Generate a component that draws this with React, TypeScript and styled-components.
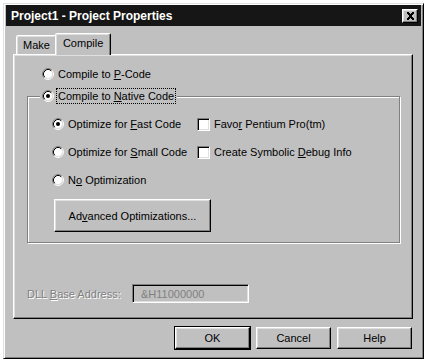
import styled, { createGlobalStyle } from 'styled-components';

const GlobalStyles = createGlobalStyle`
  html, body {
    margin: 0;
    padding: 0;
    background: #ffffff;
  }
  body {
    font-family: "Liberation Sans", Arial, sans-serif;
    font-size: 11px;
    color: #000000;
  }
  * {
    box-sizing: border-box;
  }
`;

const Window = styled.div`
  margin: 3px 0 0 3px;
  width: 421px;
  height: 356px;
  background: #c0c0c0;
  border: 1px solid;
  border-color: #dfdfdf #000000 #000000 #dfdfdf;
  box-shadow: inset 1px 1px 0 #ffffff, inset -1px -1px 0 #808080;
  padding: 1px 2px 2px 2px;
  display: flex;
  flex-direction: column;
`;

const TitleBar = styled.div`
  height: 21px;
  background: #161616;
  display: flex;
  align-items: center;
  justify-content: space-between;
  padding: 0 3px 0 5px;
`;

const Title = styled.span`
  color: #ffffff;
  font-weight: bold;
  font-size: 12px;
`;

const CloseButton = styled.div`
  width: 16px;
  height: 14px;
  background: #c0c0c0;
  border: 1px solid;
  border-color: #ffffff #000000 #000000 #ffffff;
  box-shadow: inset -1px -1px 0 #808080, inset 1px 1px 0 #dfdfdf;
  display: flex;
  align-items: center;
  justify-content: center;
`;

const Body = styled.div`
  padding: 7px 8px 6px 7px;
  display: flex;
  flex-direction: column;
`;

const TabStrip = styled.div`
  display: flex;
  align-items: flex-end;
  height: 21px;
  padding-left: 3px;
`;

const Tab = styled.div<{ $active?: boolean }>`
  position: relative;
  z-index: ${(p) => (p.$active ? 1 : 0)};
  height: ${(p) => (p.$active ? '22px' : '19px')};
  margin-bottom: ${(p) => (p.$active ? '-1px' : '0')};
  margin-left: ${(p) => (p.$active ? '-2px' : '0')};
  padding: ${(p) => (p.$active ? '2px 7px 0 7px' : '2px 6px 0 6px')};
  background: #c0c0c0;
  border: 1px solid;
  border-bottom: none;
  border-color: #ffffff #000000 transparent #ffffff;
  border-radius: 2px 2px 0 0;
  box-shadow: inset -1px 0 0 #808080, inset 1px 1px 0 #dfdfdf;
  line-height: 14px;
`;

const Page = styled.div`
  height: 265px;
  border: 1px solid;
  border-color: #ffffff #000000 #000000 #ffffff;
  box-shadow: inset -1px -1px 0 #808080, inset 1px 1px 0 #dfdfdf;
  padding: 11px 0 0 13px;
  display: flex;
  flex-direction: column;
`;

const OptionRow = styled.label<{ $indent?: number }>`
  display: flex;
  align-items: center;
  gap: 4px;
  height: 16px;
  margin-left: ${(p) => p.$indent ?? 0}px;
  white-space: nowrap;
`;

const Group = styled.div`
  margin-top: 14px;
  width: 373px;
  border: 1px solid #808080;
  box-shadow: 1px 1px 0 #ffffff, inset 1px 1px 0 #ffffff;
  padding-bottom: 10px;
  display: flex;
  flex-direction: column;
`;

const Caption = styled.div`
  margin: -9px 0 0 12px;
  width: fit-content;
  background: #c0c0c0;
  padding: 0 2px;
`;

const FocusText = styled.span`
  outline: 1px dotted #000000;
  padding: 0 1px;
  margin-left: -1px;
  line-height: 14px;
`;

const OptionsGrid = styled.div`
  margin-top: 12px;
  padding-left: 24px;
  display: grid;
  grid-template-columns: 145px auto;
  row-gap: 12px;
`;

const CheckBox = styled.span`
  width: 13px;
  height: 13px;
  background: #ffffff;
  border: 1px solid;
  border-color: #808080 #ffffff #ffffff #808080;
  box-shadow: inset 1px 1px 0 #000000, inset -1px -1px 0 #dfdfdf;
  flex: none;
`;

const PushButton = styled.div<{ $default?: boolean }>`
  width: 75px;
  height: 22px;
  background: #c0c0c0;
  border: 1px solid;
  border-color: #ffffff #000000 #000000 #ffffff;
  box-shadow: ${(p) =>
    p.$default
      ? '0 0 0 1px #000000, inset -1px -1px 0 #808080, inset 1px 1px 0 #dfdfdf'
      : 'inset -1px -1px 0 #808080, inset 1px 1px 0 #dfdfdf'};
  display: flex;
  align-items: center;
  justify-content: center;
`;

const AdvancedButton = styled(PushButton)`
  width: 157px;
  height: 33px;
  margin: 11px 0 0 26px;
`;

const AddressRow = styled.div`
  margin-top: 41px;
  display: flex;
  align-items: center;
`;

const DisabledLabel = styled.span`
  width: 105px;
  color: #808080;
  text-shadow: 1px 1px 0 #ffffff;
`;

const AddressBox = styled.div`
  width: 117px;
  height: 19px;
  border: 1px solid;
  border-color: #808080 #ffffff #ffffff #808080;
  box-shadow: inset 1px 1px 0 #000000, inset -1px -1px 0 #dfdfdf;
  background: #c0c0c0;
  color: #808080;
  padding-left: 8px;
  display: flex;
  align-items: center;
`;

const ButtonRow = styled.div`
  margin-top: 8px;
  display: flex;
  justify-content: flex-end;
  gap: 6px;
  padding-right: 1px;
`;

function Radio({ checked }: { checked?: boolean }) {
  return (
    <svg width="12" height="12" viewBox="0 0 12 12" style={{ flex: 'none' }}>
      <circle cx="6" cy="6" r="4.5" fill="#ffffff" />
      <path d="M2.11 9.89 A5.5 5.5 0 0 1 9.89 2.11" stroke="#808080" fill="none" />
      <path d="M9.89 2.11 A5.5 5.5 0 0 1 2.11 9.89" stroke="#ffffff" fill="none" />
      <path d="M2.82 9.18 A4.5 4.5 0 0 1 9.18 2.82" stroke="#000000" fill="none" />
      <path d="M9.18 2.82 A4.5 4.5 0 0 1 2.82 9.18" stroke="#dfdfdf" fill="none" />
      {checked && <circle cx="6" cy="6" r="2" fill="#000000" />}
    </svg>
  );
}

export default function App() {
  return (
    <>
      <GlobalStyles />
      <Window>
        <TitleBar>
          <Title>Project1 - Project Properties</Title>
          <CloseButton>
            <svg width="9" height="8" viewBox="0 0 9 8">
              <path d="M1 0h2v1h-2zM6 0h2v1h-2zM1 1h3v1h-3zM5 1h3v1h-3zM2 2h5v1h-5zM3 3h3v2h-3zM2 5h5v1h-5zM1 6h3v1h-3zM5 6h3v1h-3zM1 7h2v1h-2zM6 7h2v1h-2z" fill="#000000" />
            </svg>
          </CloseButton>
        </TitleBar>
        <Body>
          <TabStrip>
            <Tab>Make</Tab>
            <Tab $active>Compile</Tab>
          </TabStrip>
          <Page>
            <OptionRow $indent={15}>
              <Radio />
              <span>
                Compile to <u>P</u>-Code
              </span>
            </OptionRow>
            <Group>
              <Caption>
                <OptionRow>
                  <Radio checked />
                  <FocusText>
                    Compile to <u>N</u>ative Code
                  </FocusText>
                </OptionRow>
              </Caption>
              <OptionsGrid>
                <OptionRow>
                  <Radio checked />
                  <span>
                    Optimize for <u>F</u>ast Code
                  </span>
                </OptionRow>
                <OptionRow>
                  <CheckBox />
                  <span>
                    Favo<u>r</u> Pentium Pro(tm)
                  </span>
                </OptionRow>
                <OptionRow>
                  <Radio />
                  <span>
                    Optimize for <u>S</u>mall Code
                  </span>
                </OptionRow>
                <OptionRow>
                  <CheckBox />
                  <span>
                    Create Symbolic <u>D</u>ebug Info
                  </span>
                </OptionRow>
                <OptionRow>
                  <Radio />
                  <span>
                    N<u>o</u> Optimization
                  </span>
                </OptionRow>
              </OptionsGrid>
              <AdvancedButton>
                <span>
                  Ad<u>v</u>anced Optimizations...
                </span>
              </AdvancedButton>
            </Group>
            <AddressRow>
              <DisabledLabel>
                DLL <u>B</u>ase Address:
              </DisabledLabel>
              <AddressBox>&amp;H11000000</AddressBox>
            </AddressRow>
          </Page>
          <ButtonRow>
            <PushButton $default>OK</PushButton>
            <PushButton>Cancel</PushButton>
            <PushButton>Help</PushButton>
          </ButtonRow>
        </Body>
      </Window>
    </>
  );
}
